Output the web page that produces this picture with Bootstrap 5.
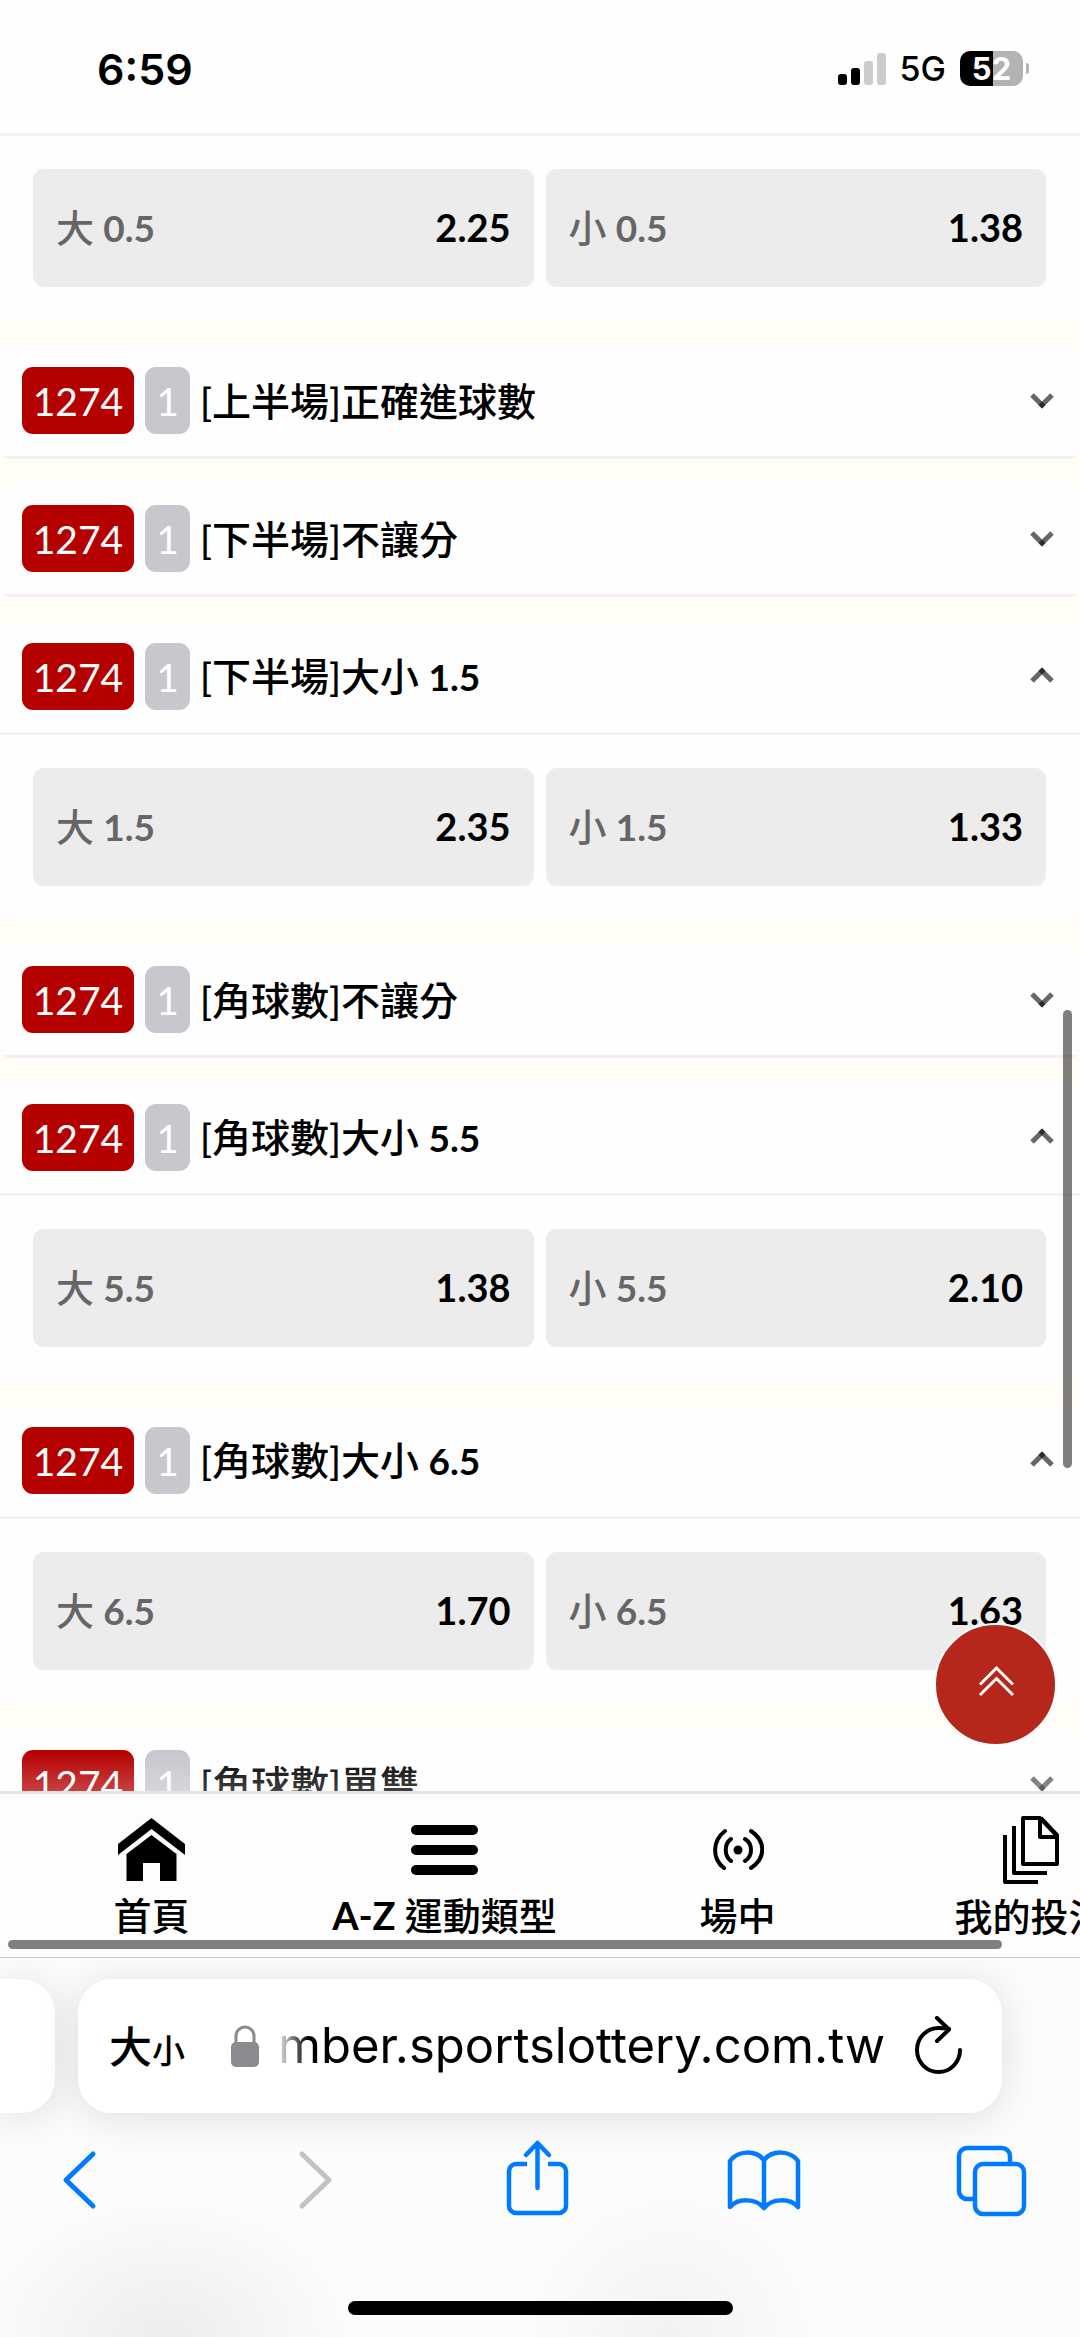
<!DOCTYPE html>
<html lang="zh-Hant">
<head>
<meta charset="utf-8">
<meta name="viewport" content="width=device-width, initial-scale=1">
<title>運彩</title>
<link href="https://cdn.jsdelivr.net/npm/bootstrap@5.3.0/dist/css/bootstrap.min.css" rel="stylesheet">
<style>
  body { font-family: Lato, "Noto Sans CJK TC", sans-serif; font-size: 39px; line-height: 48px; color: #000; background: #fefefe; }
  button { color: inherit; }
  svg { display: block; flex: none; }
  .ui-face { font-family: Inter, "Noto Sans CJK TC", sans-serif; }

  /* status bar */
  .status { height: 136px; padding: 4px 51px 0 97px; border-bottom: 3px solid #f0f0f7; }
  .clock { font-size: 43px; font-weight: 600; }
  .network { font-size: 34px; font-weight: 500; margin: 0 14px; }
  .battery { width: 63px; height: 35px; border-radius: 10px; background: linear-gradient(90deg, #000 52%, #b3b3b3 52%); color: #fff; font-size: 31px; line-height: 35px; font-weight: 700; }
  .battery-tip { width: 3px; height: 11px; margin-left: 3px; border-radius: 0 4px 4px 0; background: #b3b3b3; }

  /* markets */
  .markets { background: #fffdf6; gap: 24px; }
  .market { background: #fefefe; border-radius: 10px; overflow: hidden; flex: none; }
  .market-first { border-radius: 0 0 10px 10px; }
  .market-head { height: 114px; padding: 0 26px 0 22px; border: 0; border-bottom: 3px solid #f0f0f7; background: none; }
  .market-head[aria-expanded="true"] svg { margin-bottom: 4px; }
  .code, .leg { height: 67px; line-height: 69px; border-radius: 11px; color: #fff; }
  .code { width: 112px; background: #b50000; margin-right: 11px; }
  .leg { width: 45px; background: #c8c7ce; margin-right: 10px; }
  .market-name { font-weight: 700; }
  .picks { padding: 33px 34px 34px 33px; gap: 12px; }
  .pick { flex: 1 1 0; height: 118px; padding: 0 23px 2px 23px; border: 0; border-radius: 11px; background: #ececec; font-size: 38px; }
  .pick-name { color: #666; font-weight: 700; }
  .cjk { font-weight: 500; }
  .line { font-size: 37px; }
  .odds { font-weight: 700; }
  .fade-end { left: 0; right: 0; bottom: 0; height: 40px; background: linear-gradient(rgba(255,255,255,0), rgba(255,255,255,.25)); }
  .v-thumb { right: 8px; top: 874px; width: 9px; height: 458px; border-radius: 5px; background: rgba(0,0,0,.5); }
  .to-top { right: 23px; bottom: 45px; width: 123px; height: 123px; border: 2px solid #fff; border-radius: 50%; background: #b5261b; color: #fff; }

  /* site navigation */
  .site-nav { height: 167px; border-top: 3px solid #e4e4e4; border-bottom: 1px solid #c8c8c8; background: #fdfdfd; overflow: hidden; padding-left: 5px; }
  .site-nav a { flex: 0 0 293px; color: #000; text-decoration: none; padding-top: 18px; }
  .nav-name { font-size: 38px; font-weight: 700; margin-top: 9px; white-space: nowrap; }
  .cjk.nav-name { font-weight: 500; }
  .h-thumb { left: 8px; bottom: 8px; width: calc(100% - 86px); height: 9px; border-radius: 5px; background: #808080; }

  /* browser controls */
  .browser { height: 379px; padding-top: 21px; overflow: hidden;
    background: radial-gradient(ellipse 190px 140px at 165px 100%, #ededed, rgba(237,237,237,0)),
                radial-gradient(ellipse 150px 150px at 670px 100%, #f2f2f2, rgba(242,242,242,0)), #fcfcfc; }
  .tabs-row { gap: 23px; }
  .tab-edge, .address { height: 134px; background: #fff; box-shadow: 0 4px 40px rgba(0,0,0,.12); }
  .tab-edge { flex: 0 0 55px; border-radius: 0 34px 34px 0; }
  .address { flex: 1; min-width: 0; margin-right: 78px; border-radius: 34px; padding: 0 40px 0 31px; }
  .text-size { flex: none; width: 78px; border: 0; background: none; padding: 0; font-family: "Noto Sans CJK TC", sans-serif; font-size: 43px; font-weight: 500; white-space: nowrap; text-align: left; }
  .text-size span { font-size: 33px; }
  .lock { margin-left: 44px; }
  .url { flex: 1; min-width: 0; border: 0; padding: 0; margin: 0 30px 0 16px; background: none; font-size: 49px; line-height: 64px; text-align: right; color: #000;
    -webkit-mask-image: linear-gradient(90deg, transparent, #000 34px); mask-image: linear-gradient(90deg, transparent, #000 34px); }
  .tools { padding: 25px 51px 0 43px; color: #007aff; }
  .tools button { width: 74px; height: 84px; padding: 0; border: 0; background: none; }
  .home-bar { width: 385px; height: 14px; border-radius: 7px; background: #000; margin: 79px auto 0; }
</style>
<script src="https://cdn.jsdelivr.net/npm/bootstrap@5.3.0/dist/js/bootstrap.bundle.min.js"></script>
</head>
<body class="d-flex flex-column vh-100 overflow-hidden">

<svg class="d-none" aria-hidden="true">
  <symbol id="down" viewBox="0 0 24 16"><path d="M2 2 12 12 22 2" fill="none" stroke="#666" stroke-width="5"/><path d="M12 8.500 15.500 12 12 15.500 8.500 12z" fill="#2b2b2b"/></symbol>
  <symbol id="up" viewBox="0 0 24 16"><path d="M2 14 12 4 22 14" fill="none" stroke="#666" stroke-width="5"/><path d="M12 .5 15.500 4 12 7.500 8.500 4z" fill="#2b2b2b"/></symbol>
</svg>

<header class="status ui-face d-flex align-items-center justify-content-between flex-shrink-0">
  <div class="clock">6:59</div>
  <div class="d-flex align-items-center">
    <svg width="48" height="32" viewBox="0 0 48 32"><rect y="21" width="9" height="11" rx="3"/><rect x="13" y="15" width="9" height="17" rx="3"/><g fill="#ccc"><rect x="26" y="8" width="9" height="24" rx="3"/><rect x="39" width="9" height="32" rx="3"/></g></svg>
    <div class="network">5G</div>
    <div class="battery text-center">52</div><div class="battery-tip"></div>
  </div>
</header>

<div class="position-relative d-flex flex-column flex-fill overflow-hidden">
<main class="markets d-flex flex-column flex-fill overflow-hidden">
  <section class="market market-first">
    <div class="picks d-flex">
      <button class="pick d-flex align-items-center justify-content-between"><span class="pick-name"><span class="cjk">大</span> <span class="line">0.5</span></span><span class="odds">2.25</span></button>
      <button class="pick d-flex align-items-center justify-content-between"><span class="pick-name"><span class="cjk">小</span> <span class="line">0.5</span></span><span class="odds">1.38</span></button>
    </div>
  </section>

  <section class="market">
    <button class="market-head w-100 d-flex align-items-center" aria-expanded="false"><span class="code">1274</span><span class="leg">1</span><span class="market-name me-auto"><span class="cjk">[上半場]正確進球數</span></span><svg width="24" height="16"><use href="#down"/></svg></button>
  </section>

  <section class="market">
    <button class="market-head w-100 d-flex align-items-center" aria-expanded="false"><span class="code">1274</span><span class="leg">1</span><span class="market-name me-auto"><span class="cjk">[下半場]不讓分</span></span><svg width="24" height="16"><use href="#down"/></svg></button>
  </section>

  <section class="market">
    <button class="market-head w-100 d-flex align-items-center" aria-expanded="true"><span class="code">1274</span><span class="leg">1</span><span class="market-name me-auto"><span class="cjk">[下半場]大小</span> <span class="line">1.5</span></span><svg width="24" height="16"><use href="#up"/></svg></button>
    <div class="picks d-flex">
      <button class="pick d-flex align-items-center justify-content-between"><span class="pick-name"><span class="cjk">大</span> <span class="line">1.5</span></span><span class="odds">2.35</span></button>
      <button class="pick d-flex align-items-center justify-content-between"><span class="pick-name"><span class="cjk">小</span> <span class="line">1.5</span></span><span class="odds">1.33</span></button>
    </div>
  </section>

  <section class="market">
    <button class="market-head w-100 d-flex align-items-center" aria-expanded="false"><span class="code">1274</span><span class="leg">1</span><span class="market-name me-auto"><span class="cjk">[角球數]不讓分</span></span><svg width="24" height="16"><use href="#down"/></svg></button>
  </section>

  <section class="market">
    <button class="market-head w-100 d-flex align-items-center" aria-expanded="true"><span class="code">1274</span><span class="leg">1</span><span class="market-name me-auto"><span class="cjk">[角球數]大小</span> <span class="line">5.5</span></span><svg width="24" height="16"><use href="#up"/></svg></button>
    <div class="picks d-flex">
      <button class="pick d-flex align-items-center justify-content-between"><span class="pick-name"><span class="cjk">大</span> <span class="line">5.5</span></span><span class="odds">1.38</span></button>
      <button class="pick d-flex align-items-center justify-content-between"><span class="pick-name"><span class="cjk">小</span> <span class="line">5.5</span></span><span class="odds">2.10</span></button>
    </div>
  </section>

  <section class="market">
    <button class="market-head w-100 d-flex align-items-center" aria-expanded="true"><span class="code">1274</span><span class="leg">1</span><span class="market-name me-auto"><span class="cjk">[角球數]大小</span> <span class="line">6.5</span></span><svg width="24" height="16"><use href="#up"/></svg></button>
    <div class="picks d-flex">
      <button class="pick d-flex align-items-center justify-content-between"><span class="pick-name"><span class="cjk">大</span> <span class="line">6.5</span></span><span class="odds">1.70</span></button>
      <button class="pick d-flex align-items-center justify-content-between"><span class="pick-name"><span class="cjk">小</span> <span class="line">6.5</span></span><span class="odds">1.63</span></button>
    </div>
  </section>

  <section class="market">
    <button class="market-head w-100 d-flex align-items-center" aria-expanded="false"><span class="code">1274</span><span class="leg">1</span><span class="market-name me-auto"><span class="cjk">[角球數]單雙</span></span><svg width="24" height="16"><use href="#down"/></svg></button>
  </section>
</main>
  <div class="fade-end position-absolute"></div>
  <div class="v-thumb position-absolute"></div>
  <button class="to-top position-absolute d-flex align-items-center justify-content-center p-0" aria-label="Top">
    <svg class="mb-2" width="36" height="32" viewBox="0 0 36 32" fill="none" stroke="#fff" stroke-width="3"><path d="M2 19.500 18.500 3 35 19.500M2 30 18.500 13.500 35 30"/></svg>
  </button>
</div>

<nav class="site-nav position-relative d-flex flex-shrink-0">
  <a href="#home" class="d-flex flex-column align-items-center">
    <svg width="67" height="70" viewBox="0 0 67 70"><path d="M33.500 6 67 32V43L33.500 17 0 43V32z"/><path d="M33.500 23 58.500 42V69H42V51H25V69H8.500V42z"/></svg>
    <span class="nav-name cjk">首頁</span></a>
  <a href="#sports" class="d-flex flex-column align-items-center">
    <svg width="67" height="70" viewBox="0 0 67 70"><rect y="13" width="67" height="10" rx="5"/><rect y="33" width="67" height="10" rx="5"/><rect y="53" width="67" height="10" rx="5"/></svg>
    <span class="nav-name">A-Z <span class="cjk">運動類型</span></span></a>
  <a href="#live" class="d-flex flex-column align-items-center">
    <svg width="52" height="70" viewBox="0 0 52 70" fill="none" stroke="#000" stroke-width="4" stroke-linecap="round"><path d="M13 19C0 29 0 47 12 56M39 19C54 29 54 46 39 56M19 27C12 32 12 44 19 49M33 27C41 32 41 44 33 49"/><circle cx="26" cy="38" r="4.500" fill="#000" stroke="none"/></svg>
    <span class="nav-name cjk">場中</span></a>
  <a href="#bets" class="d-flex flex-column align-items-center">
    <svg width="56" height="72" viewBox="0 0 56 72" fill="none" stroke="#000" stroke-width="4" stroke-linejoin="round"><path d="M20 6H37L54 24V52H20z"/><path d="M37 6V25H54M11 14V61H44M2 23V70H35"/><path d="M38 6 55 24"/></svg>
    <span class="nav-name cjk mt-2">我的投注</span></a>
  <div class="h-thumb position-absolute"></div>
</nav>

<footer class="browser ui-face flex-shrink-0">
  <div class="tabs-row d-flex">
    <div class="tab-edge"></div>
    <div class="address d-flex align-items-center">
      <button class="text-size" aria-label="文字大小">大<span>小</span></button>
      <svg class="lock" width="28" height="42" viewBox="0 0 28 42"><rect y="17" width="28" height="25" rx="5" fill="#8a8a8f"/><path d="M5 18V11a9 9 0 0 1 18 0v7" fill="none" stroke="#8a8a8f" stroke-width="3"/></svg>
      <input class="url" type="text" aria-label="網址" value="mber.sportslottery.com.tw" readonly>
      <button class="border-0 bg-transparent p-0" aria-label="重新載入"><svg width="47" height="60" viewBox="0 0 47 60" fill="none" stroke="#000" stroke-width="4" stroke-linecap="round" stroke-linejoin="round"><path d="M45 34A21.500 22 0 1 1 23.500 12Q29 12 34 13M22 2 34 13.500 22 25"/></svg></button>
    </div>
  </div>
  <div class="tools d-flex justify-content-between">
    <button aria-label="上一頁"><svg width="74" height="84" viewBox="0 0 74 84" fill="none" stroke="#007aff" stroke-width="5" stroke-linecap="round" stroke-linejoin="round"><path d="M50 16 23 42 50 68"/></svg></button>
    <button aria-label="下一頁"><svg width="74" height="84" viewBox="0 0 74 84" fill="none" stroke="#c2c2c2" stroke-width="5" stroke-linecap="round" stroke-linejoin="round"><path d="M31 16 58 42 31 68"/></svg></button>
    <button aria-label="分享"><svg width="74" height="84" viewBox="0 0 74 84" fill="none" stroke="#007aff" stroke-width="4.500" stroke-linecap="round" stroke-linejoin="round"><path d="M28 26H17a7 7 0 0 0-7 7V68a7 7 0 0 0 7 7H60a7 7 0 0 0 7-7V33a7 7 0 0 0-7-7H49" stroke-linecap="butt"/><path d="M38.500 50V6M27 17 38.500 5 50 17"/></svg></button>
    <button aria-label="書籤"><svg width="74" height="84" viewBox="0 0 74 84" fill="none" stroke="#007aff" stroke-width="4.500" stroke-linecap="round" stroke-linejoin="round"><path d="M37 22C29 12 11 12 3 23V69C11 60 29 60 37 70C45 60 63 60 71 69V23C63 12 45 12 37 22V70"/></svg></button>
    <button aria-label="分頁"><svg width="74" height="84" viewBox="0 0 74 84" fill="none" stroke="#007aff" stroke-width="4.500"><path d="M18 61H12a8 8 0 0 1-8-8V18a8 8 0 0 1 8-8H47a8 8 0 0 1 8 8V25"/><rect x="20" y="26" width="49" height="50" rx="8"/></svg></button>
  </div>
  <div class="home-bar"></div>
</footer>
</body>
</html>
